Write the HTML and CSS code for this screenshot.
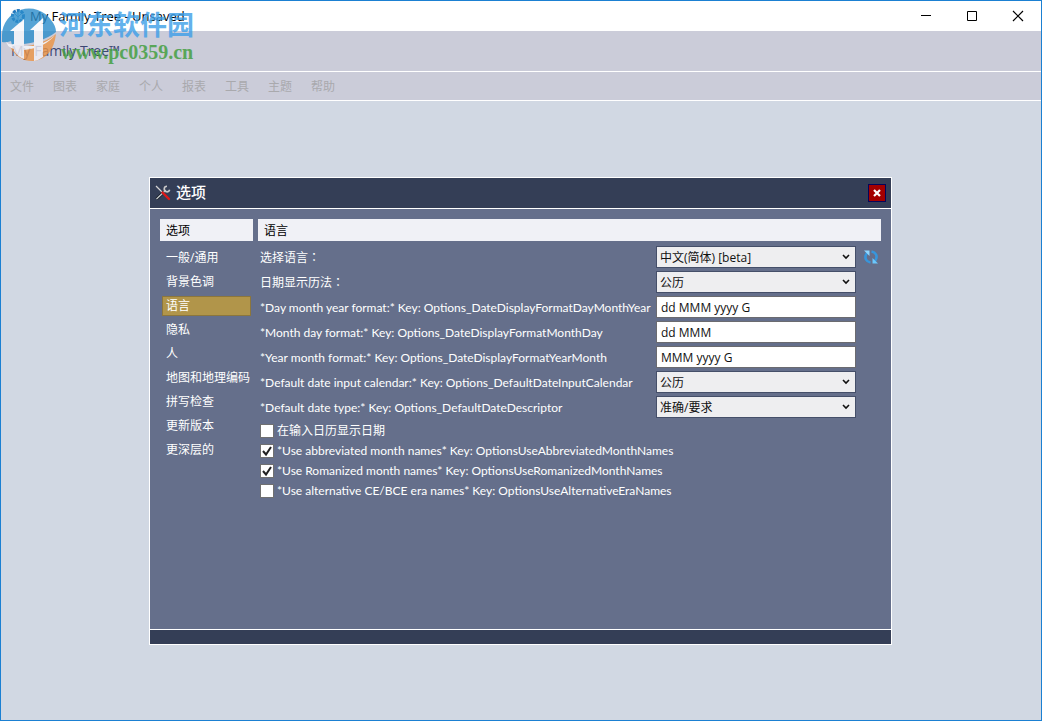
FILE: index.html
```html
<!DOCTYPE html>
<html lang="zh-CN">
<head>
<meta charset="utf-8">
<title>My Family Tree - Unsaved</title>
<link rel="stylesheet" href="styles.css">
</head>
<body>
<div class="window">
  <header class="titlebar">
    <svg class="app-icon" viewBox="0 0 16 16" width="16" height="16" aria-hidden="true"><circle cx="8" cy="8" r="5.500" fill="none" stroke="#2478bd" stroke-width="3" stroke-dasharray="3 1"/><path d="M8 4v8M5 6l3 3 3-3" stroke="#5fa8dc" fill="none"/></svg>
    <span class="title">My Family Tree - Unsaved</span>
    <div class="window-controls">
      <button class="win-btn" aria-label="Minimize"><svg width="12" height="12" viewBox="0 0 12 12"><path d="M1 5.500h10" stroke="#000"/></svg></button>
      <button class="win-btn" aria-label="Maximize"><svg width="12" height="12" viewBox="0 0 12 12"><path d="M1.500 1.500h9v9h-9z" fill="none" stroke="#000"/></svg></button>
      <button class="win-btn" aria-label="Close"><svg width="12" height="12" viewBox="0 0 12 12"><path d="M1 1l10 10M11 1L1 11" stroke="#000" stroke-width="1.200"/></svg></button>
    </div>
  </header>
  <div class="brand">My Family Tree™</div>
  <nav class="menubar">
    <button class="menu">文件</button><button class="menu">图表</button><button class="menu">家庭</button><button class="menu">个人</button><button class="menu">报表</button><button class="menu">工具</button><button class="menu">主题</button><button class="menu">帮助</button>
  </nav>
  <main class="workspace">
    <section class="dialog" role="dialog" aria-labelledby="dialog-title">
      <header class="dialog-head">
        <svg width="16" height="16" viewBox="0 0 16 16" aria-hidden="true"><path d="M1 1l7 7" stroke="#d5d5d5" stroke-width="1.300"/><path d="M1.500 14L11 5" stroke="#111820" stroke-width="3"/><path d="M1.500 14L11 5" stroke="#c4c8cc" stroke-width="1.400"/><path d="M12 1.200a2.800 2.800 0 1 0 2.700 3.600" fill="none" stroke="#c9c9c9" stroke-width="1.600"/><path d="M7.500 7.500l6.500 6.500" stroke="#e01818" stroke-width="2.400" stroke-linecap="round"/></svg>
        <h1 class="dialog-title" id="dialog-title">选项</h1>
        <button class="dialog-close" aria-label="关闭"><svg width="8" height="8" viewBox="0 0 8 8"><path d="M1 1l6 6M7 1L1 7" stroke="#fff" stroke-width="2.200"/></svg></button>
      </header>
      <div class="dialog-body">
        <nav class="sidebar">
          <h2 class="panel-title">选项</h2>
          <div class="side-list">
            <button class="side-item">一般/通用</button>
            <button class="side-item">背景色调</button>
            <button class="side-item selected">语言</button>
            <button class="side-item">隐私</button>
            <button class="side-item">人</button>
            <button class="side-item">地图和地理编码</button>
            <button class="side-item">拼写检查</button>
            <button class="side-item">更新版本</button>
            <button class="side-item">更深层的</button>
          </div>
        </nav>
        <form class="content">
          <h2 class="panel-title">语言</h2>
          <div class="fields">
            <div class="row"><label class="label cjk" lang="zh-Hant" for="lang">选择语言：</label><select class="field select" id="lang"><option>中文(简体) [beta]</option></select><button type="button" class="refresh" aria-label="刷新"><svg width="16" height="16" viewBox="0 0 16 16"><path d="M4 4Q1.500 7 3 10.500Q4.300 13 7.500 13.500" fill="none" stroke="#3796dc" stroke-width="2.600"/><path d="M12 12Q14.500 9 13 5.500Q11.700 3 8.500 2.500" fill="none" stroke="#3796dc" stroke-width="2.600"/><path d="M1 1.500h5.500v5.500z" fill="#8ed6ff"/><path d="M15 14.500H9.500V9z" fill="#6cc8fc"/></svg></button></div>
            <div class="row"><label class="label cjk" lang="zh-Hant" for="cal">日期显示历法：</label><select class="field select" id="cal"><option>公历</option></select></div>
            <div class="row"><label class="label" for="dmy">*Day month year format:* Key: Options_DateDisplayFormatDayMonthYear</label><input class="field" id="dmy" type="text" value="dd MMM yyyy G"></div>
            <div class="row"><label class="label" for="md">*Month day format:* Key: Options_DateDisplayFormatMonthDay</label><input class="field" id="md" type="text" value="dd MMM"></div>
            <div class="row"><label class="label" for="ym">*Year month format:* Key: Options_DateDisplayFormatYearMonth</label><input class="field" id="ym" type="text" value="MMM yyyy G"></div>
            <div class="row"><label class="label" for="incal">*Default date input calendar:* Key: Options_DefaultDateInputCalendar</label><select class="field select" id="incal"><option>公历</option></select></div>
            <div class="row"><label class="label" for="dtype">*Default date type:* Key: Options_DefaultDateDescriptor</label><select class="field select" id="dtype"><option>准确/要求</option></select></div>
          </div>
          <div class="checks">
            <label class="check"><input class="box" type="checkbox">在输入日历显示日期</label>
            <label class="check"><input class="box" type="checkbox" checked>*Use abbreviated month names* Key: OptionsUseAbbreviatedMonthNames</label>
            <label class="check"><input class="box" type="checkbox" checked>*Use Romanized month names* Key: OptionsUseRomanizedMonthNames</label>
            <label class="check"><input class="box" type="checkbox">*Use alternative CE/BCE era names* Key: OptionsUseAlternativeEraNames</label>
          </div>
        </form>
      </div>
      <footer class="dialog-foot"></footer>
    </section>
  </main>
  <div class="watermark">
    <svg width="58" height="60" viewBox="0 0 58 60" aria-hidden="true"><path d="M1 30A27 27 0 0 1 50 15Q55 21 55 27Q40 39 11 40L10 36Q5 38 1 37z" fill="#2b8dcb"/><path d="M55 29Q52 53 33 56Q18 57 9 42Q37 43 55 29z" fill="#ed9444"/><path d="M5 37Q8 40 13 39V26H9L23 14V41H33V25H29L42 13V38Q51 34 55 29Q44 43 23 45Q8 46 5 37z" fill="#f7f8fc"/><path d="M13 40h10v14q-6-2-10-8zM33 40h9v12q-4 3-9 4z" fill="#f3f1f6"/></svg>
    <div class="mark-text"><span class="mark-name">河东软件园</span><span class="mark-url">www.pc0359.cn</span></div>
  </div>
</div>
</body>
</html>
```
FILE: styles.css
```css
* { box-sizing: border-box; }
body { margin: 0; font: 12px/16px "Open Sans", "Noto Sans CJK SC", sans-serif; color: #000; }
button, input, select { font: inherit; color: inherit; margin: 0; padding: 0; border: 0; background: none; border-radius: 0; }
button { display: flex; align-items: center; }
h1, h2 { margin: 0; font-weight: 400; }
.window { position: relative; display: flex; flex-direction: column; min-height: 100vh; border: 1px solid #1b80d2; background: #d1d8e3; }
.titlebar { display: flex; align-items: center; height: 30px; padding-left: 9px; gap: 4px; background: #fff; }
.title { font-size: 13px; }
.window-controls { display: flex; margin-left: auto; height: 28px; }
.win-btn { width: 46px; justify-content: center; }
.brand { height: 40px; padding: 10px; font-size: 14px; line-height: 20px; color: #3c4674; background: #cbccd9; }
.menubar { display: flex; gap: 19px; height: 30px; padding: 2px 9px 0; border-top: 1px solid #fff; border-bottom: 1px solid #fff; background: #cbccd9; }
.menu { color: #a9a9ad; }
.workspace { flex: 1; display: flex; align-items: center; justify-content: center; padding-right: 1px; }
.dialog { display: flex; flex-direction: column; width: 743px; min-height: 468px; border: 1px solid #fff; background: #656f8b; color: #fff; }
.dialog-head { display: flex; align-items: center; gap: 5px; height: 31px; padding: 0 5px; border-bottom: 1px solid #fff; background: #343e56; }
.dialog-title { padding-bottom: 2px; font-size: 15px; line-height: 20px; font-weight: 500; }
.dialog-close { justify-content: center; width: 18px; height: 18px; margin-left: auto; border: 1px solid #05055a; background: #a30000; }
.dialog-body { flex: 1; display: flex; gap: 5px; padding: 10px; }
.dialog-foot { height: 15px; border-top: 1px solid #fff; background: #343e56; }
.sidebar { flex: none; width: 93px; }
.panel-title { height: 22px; padding: 0 6px; font-size: 12px; line-height: 23px; background: #f0f1f6; color: #000; }
.side-list { display: flex; flex-direction: column; gap: 4px; padding: 7px 2px; }
.side-item { height: 20px; padding: 0 3px; border: 1px solid transparent; white-space: nowrap; }
.side-item.selected { border-color: #8c763c; background: #b1954a; }
.content { flex: 1; min-width: 0; }
.fields { display: grid; gap: 3px; padding: 5px 0 3px 2px; }
.row { display: grid; grid-template-columns: minmax(0, 1fr) 200px 25px; align-items: center; }
.label, .check { font-family: Lato, "Noto Sans CJK SC", sans-serif; white-space: nowrap; }
.label { padding-top: 2px; }
.label.cjk { padding-top: 0; font-family: "Noto Sans CJK TC", sans-serif; }
.field { width: 100%; height: 22px; padding: 1px 4px 0; border: 1px solid #6b6b70; background: #fff; color: #111; }
.select { appearance: none; padding: 2px 3px 0; border-color: #454f69; background: #eeeef0 url("data:image/svg+xml,%3Csvg xmlns='http://www.w3.org/2000/svg' width='8' height='6'%3E%3Cpath d='M1 1l3 3 3-3' fill='none' stroke='%23111' stroke-width='1.600'/%3E%3C/svg%3E") no-repeat right 5px center; }
.refresh { justify-content: center; padding-left: 4px; }
.checks { display: grid; padding-left: 2px; }
.check { display: flex; align-items: center; gap: 3px; height: 20px; line-height: 18px; }
.box { appearance: none; flex: none; width: 14px; height: 14px; border: 1px solid #707070; background: #fff; }
.box:checked { background: #fff url("data:image/svg+xml,%3Csvg xmlns='http://www.w3.org/2000/svg' width='12' height='12'%3E%3Cpath d='M2 6l3 3.500L10 2' fill='none' stroke='%23222' stroke-width='2'/%3E%3C/svg%3E") center; }
.watermark { position: absolute; top: 4px; left: 0; display: flex; opacity: 0.8; pointer-events: none; }
.mark-text { display: flex; flex-direction: column; padding-top: 3px; }
.mark-name { font: 700 27px/32px "Noto Sans CJK SC", sans-serif; color: #3d9fe8; }
.mark-url { padding-left: 2px; font: 700 20px/24px "Liberation Serif", serif; color: #3d9d3a; }
```
